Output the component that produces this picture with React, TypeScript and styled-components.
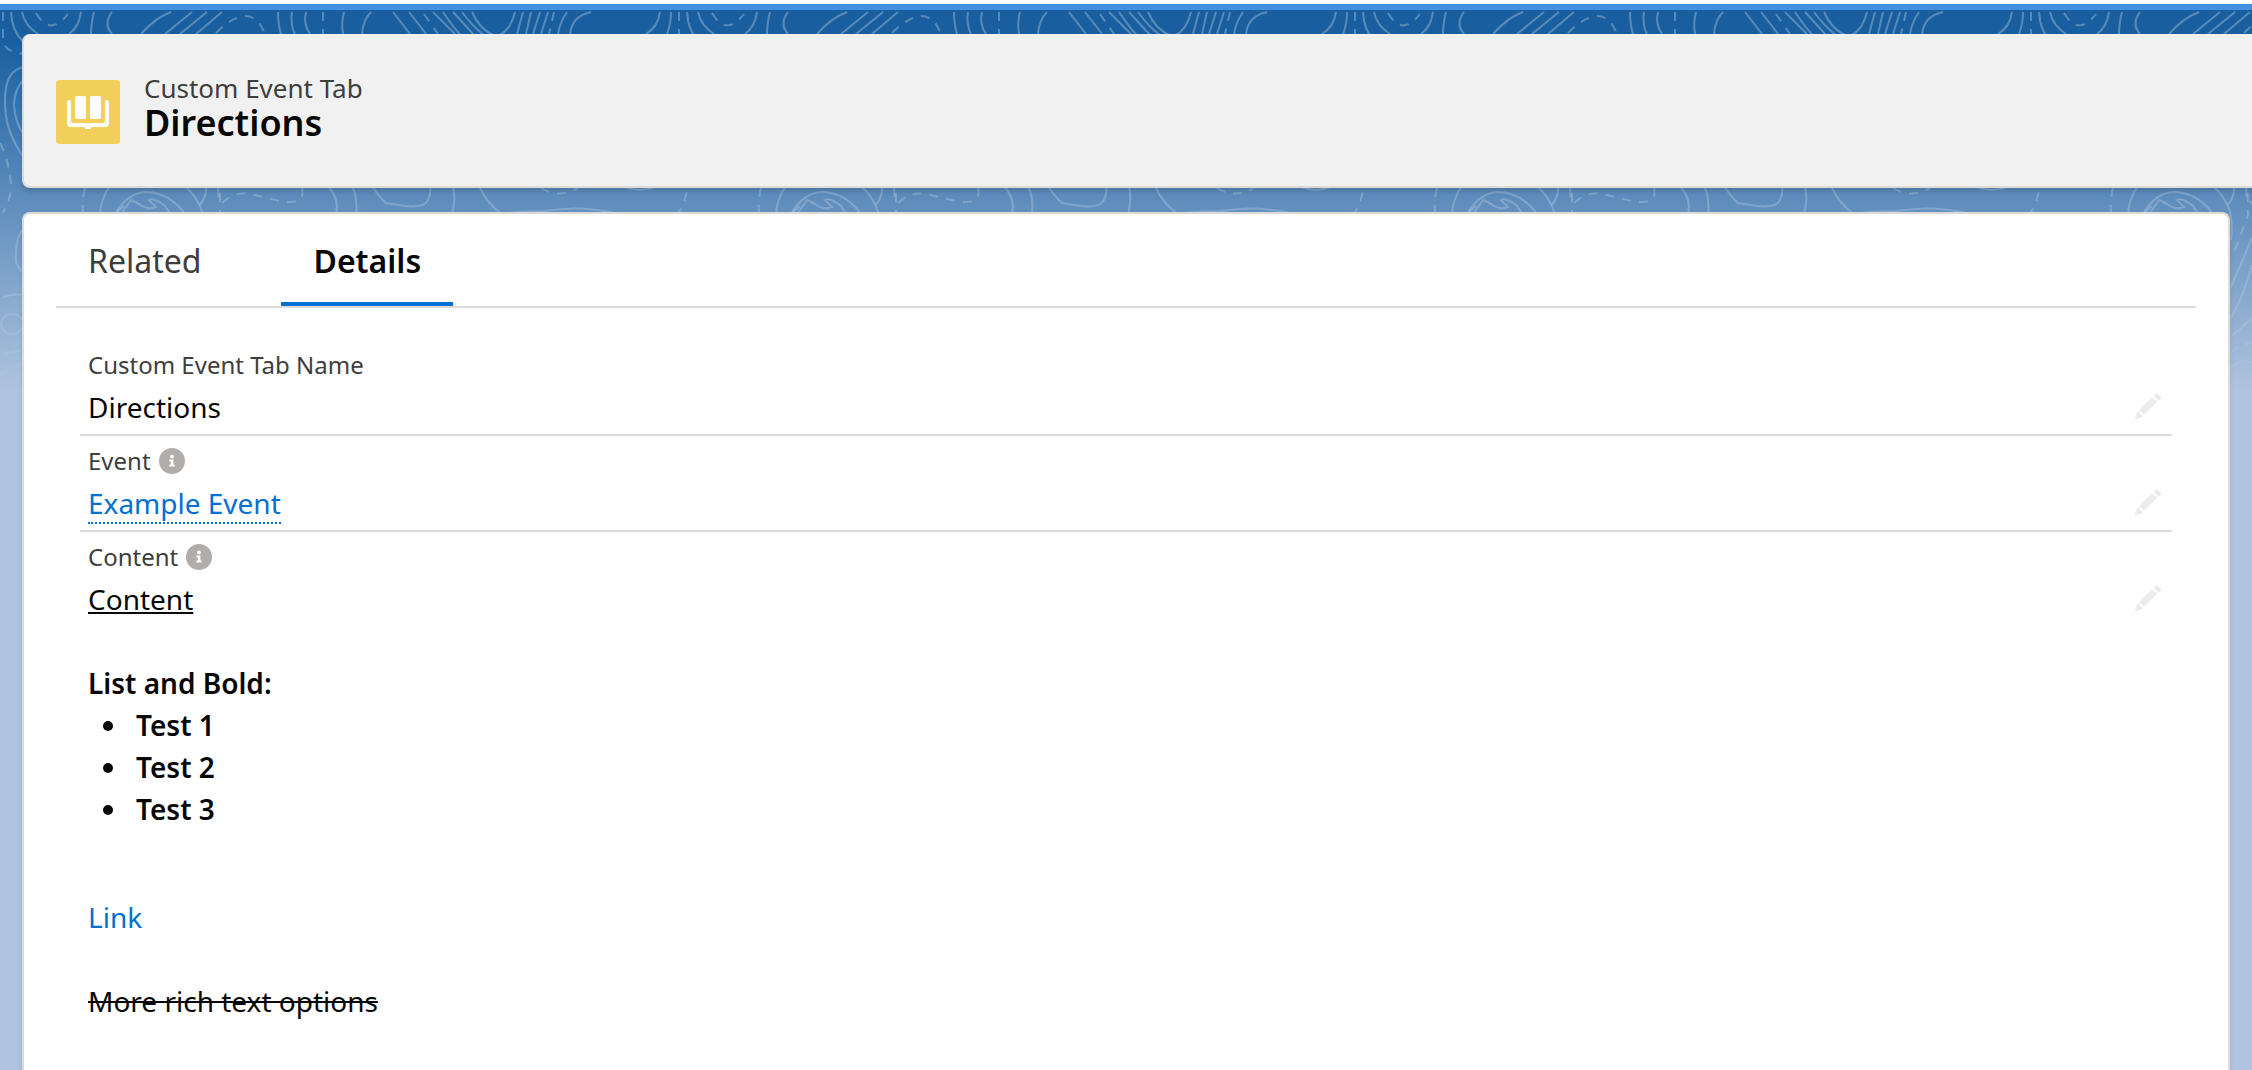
import React, { useState } from "react";
import styled, { createGlobalStyle } from "styled-components";

const GlobalStyle = createGlobalStyle`
  *, *::before, *::after { box-sizing: border-box; }
  body {
    margin: 0;
    background: #b0c4df;
    color: #080707;
    font-family: "Noto Sans", "Open Sans", sans-serif;
    font-size: 28px;
    line-height: 42px;
  }
`;

const Page = styled.div`
  position: relative;
  display: flex;
  flex-direction: column;
  min-height: 100vh;
  overflow: hidden;
`;

const TopBar = styled.div`
  height: 10px;
  border-top: 4px solid #ffffff;
  background: #4190e2;
`;

const Backdrop = styled.svg`
  position: absolute;
  top: 10px;
  left: 0;
  width: 100%;
  height: 400px;
`;

const Content = styled.main`
  position: relative;
  flex: 1;
  display: flex;
  flex-direction: column;
  gap: 24px;
  padding: 24px 22px 0;
`;

const PageHeader = styled.header`
  display: flex;
  align-items: flex-start;
  gap: 24px;
  margin-right: -32px;
  padding: 38px 32px 42px;
  border: solid #dddbda;
  border-width: 0 2px 2px;
  border-radius: 8px;
  background: #f1f1f1;
  box-shadow: 0 4px 4px rgba(0, 0, 0, 0.12);
`;

const EntityIcon = styled.svg`
  width: 64px;
  height: 64px;
  margin-top: 8px;
  border-radius: 4px;
  background: #f2cf5b;
`;

const EntityType = styled.p`
  margin: 0;
  color: #3e3e3c;
  font-size: 26px;
  line-height: 32px;
`;

const RecordName = styled.h1`
  margin: 0;
  font-size: 36px;
  font-weight: 600;
  line-height: 38px;
`;

const Card = styled.section`
  flex: 1;
  padding: 0 32px 24px;
  border: 2px solid #dddbda;
  border-bottom: 0;
  border-radius: 8px 8px 0 0;
  background: #ffffff;
  box-shadow: 0 4px 4px rgba(0, 0, 0, 0.1);
`;

const TabList = styled.div`
  display: flex;
  gap: 48px;
  border-bottom: 2px solid #dddbda;
`;

const Tab = styled.button<{ $active: boolean }>`
  height: 92px;
  padding: 0 32px;
  border: 0;
  background: none;
  box-shadow: ${(p) => (p.$active ? "inset 0 -4px #0070d2" : "none")};
  color: ${(p) => (p.$active ? "#080707" : "#3e3e3c")};
  font-family: inherit;
  font-size: 32px;
  font-weight: ${(p) => (p.$active ? 600 : 400)};
  cursor: pointer;
`;

const Form = styled.div`
  margin: 32px 24px 0;
`;

const Field = styled.div`
  display: flex;
  align-items: flex-start;
  justify-content: space-between;
  padding: 8px 10px 6px 8px;
  border-bottom: 2px solid #dddbda;

  &:last-child {
    border-bottom: 0;
  }
`;

const FieldLabel = styled.div`
  display: flex;
  align-items: center;
  gap: 8px;
  height: 34px;
  margin-bottom: 4px;
  color: #3e3e3c;
  font-size: 24px;
  line-height: 34px;
`;

const IconButton = styled.button`
  display: flex;
  padding: 0;
  border: 0;
  background: none;
  cursor: pointer;
`;

const EditButton = styled(IconButton)`
  margin-top: 44px;
`;

const Icon = styled.svg`
  width: 28px;
  height: 28px;
`;

const InfoGlyph = styled.svg`
  width: 26px;
  height: 26px;
`;

const Link = styled.a`
  color: #0070d2;
  text-decoration: none;
`;

const LookupLink = styled(Link)`
  border-bottom: 2px dotted #0070d2;
`;

const RichText = styled.div`
  p {
    min-height: 42px;
    margin: 0;
  }

  u {
    text-decoration-thickness: 2px;
    text-underline-offset: 2px;
    text-decoration-skip-ink: none;
  }

  s {
    text-decoration-thickness: 2px;
  }

  strong,
  ul {
    font-weight: 600;
  }

  ul {
    margin: 0 0 24px;
    padding-left: 42px;
  }

  li {
    padding-left: 6px;
  }
`;

const LINES = [
  "M11 12Q12 32 24 42", "M22 12Q25 26 38 34", "M81 12Q79 27 69 34", "M94 12Q91 24 91 34",
  "M112 12Q103 24 112 34", "M171 12Q155 18 141 34", "M192 12L165 34", "M207 12L180 34",
  "M222 12L196 34", "M278 12Q278 24 281 34", "M292 12Q290 24 295 34", "M306 12Q303 24 310 34",
  "M344 12Q341 24 343 34", "M371 12Q363 20 362 34", "M393 12L410 34", "M409 12Q420 26 426 34",
  "M433 12L455 34", "M443 12Q455 30 467 42", "M453 12L475 36", "M462 12Q472 26 485 36",
  "M472 12Q479 29 495 36", "M515 12Q511 29 500 35", "M523 12L517 34", "M531 12L526 34",
  "M540 12L533 34", "M548 12L541 34", "M567 12Q560 22 558 34", "M591 12Q572 16 570 34",
  "M660 12Q658 27 646 34", "M671 12Q671 24 667 34",
  "M110 186Q101 198 100 214", "M185 186Q198 198 202 212Q205 225 203 240",
  "M115 214Q128 192 147 192Q170 193 185 214",
  "M117 212L124 206M121 214L131 200Q136 202 142 206T156 207L149 200Q154 197 165 206L169 212",
  "M206 186Q207 196 200 205", "M328 186Q340 200 336 214", "M352 186Q358 198 356 214",
  "M372 186Q380 198 386 203L405 206Q425 208 428 200Q431 194 430 186", "M453 186Q456 200 452 214",
  "M479 186Q487 204 502 214", "M625 187Q640 193 654 187", "M508 213Q525 211 545 211Q580 205 614 213",
  "M24 67Q5 70 5 100Q4 130 24 158", "M24 79Q14 90 14 105Q15 122 24 135",
  "M24 229Q15 235 16 262Q18 268 24 273", "M2 298Q12 293 24 295", "M2 354L24 350",
  "M0 397Q10 382 24 374", "M0 413Q12 404 24 392",
  "M224 238L203 287", "M224 265Q216 295 203 318", "M226 316L202 338", "M202 369Q214 357 226 363",
];

const DASHES = [
  "M3 12V40Q4 52 24 54", "M36 13Q50 37 68 14", "M216 33Q232 17 245 16Q258 16 264 32",
  "M323 12V34", "M424 14L438 34", "M554 12L549 34", "M679 12V40", "M85 188Q82 200 83 212",
  "M218 188L219 204", "M222 203Q235 191 250 194L280 201Q306 206 302 188", "M541 188Q558 199 578 188",
  "M0 143Q11 165 11 190Q9 203 3 212", "M0 375L24 361", "M220 193V215L204 258", "M226 343Q212 343 202 354",
];

function TopographicBackdrop() {
  return (
    <Backdrop aria-hidden="true">
      <defs>
        <pattern id="contours" width="676" height="420" y="-10" patternUnits="userSpaceOnUse">
          <g fill="none" stroke="#ffffff" strokeOpacity="0.27" strokeWidth="2">
            {LINES.map((d) => (
              <path key={d} d={d} />
            ))}
            <ellipse cx="12" cy="324" rx="11" ry="10" />
            <g strokeDasharray="9 8">
              {DASHES.map((d) => (
                <path key={d} d={d} />
              ))}
            </g>
          </g>
        </pattern>
        <linearGradient id="haze" gradientUnits="userSpaceOnUse" x1="0" y1="30" x2="0" y2="380">
          <stop offset="0" stopColor="#b0c4df" stopOpacity="0" />
          <stop offset="1" stopColor="#b0c4df" />
        </linearGradient>
      </defs>
      <rect width="100%" height="100%" fill="#195f9f" />
      <rect width="100%" height="100%" fill="url(#contours)" />
      <rect width="100%" height="100%" fill="url(#haze)" />
    </Backdrop>
  );
}

function BookIcon() {
  return (
    <EntityIcon viewBox="0 0 64 64" aria-hidden="true">
      <g fill="#ffffff">
        <rect x="19" y="16" width="11" height="23" rx="2" />
        <rect x="34" y="16" width="11" height="23" rx="2" />
        <path d="M13 20q2 0 2 2v19q0 2 2 2h30q2 0 2-2V22q0-2 2-2 2 0 2 2v21q0 4-4 4H36q-1 0-1 1 0 1-1 1h-4q-1 0-1-1 0-1-1-1H15q-4 0-4-4V22q0-2 2-2z" />
      </g>
    </EntityIcon>
  );
}

function InfoIcon() {
  return (
    <InfoGlyph viewBox="0 0 26 26" aria-hidden="true">
      <circle cx="13" cy="13" r="13" fill="#b0adab" />
      <g fill="#ffffff">
        <circle cx="13" cy="8.5" r="1.9" />
        <path d="M10.4 11.6h4v5h1.3v1.9h-5.4v-1.9h1.5v-3.1h-1.4z" />
      </g>
    </InfoGlyph>
  );
}

function PencilIcon() {
  return (
    <Icon viewBox="0 0 28 28" aria-hidden="true">
      <g fill="#ecebea">
        <path d="M18.300 5.300 23 10 10 22.700 5 18z" />
        <path d="M19.700 3.700 21.500 1.900Q22.700 .8 24 1.900L26.500 4.400Q27.600 5.700 26.500 7L24.500 9.100z" />
        <path d="M4 19.200 8.800 24.200Q8.900 25 8.100 25.200L2 27Q.7 27.200 1 26L3 19.700Q3.300 19 4 19.200z" />
      </g>
    </Icon>
  );
}

interface DetailFieldProps {
  label: string;
  help?: boolean;
  children: React.ReactNode;
}

function DetailField({ label, help, children }: DetailFieldProps) {
  return (
    <Field>
      <div>
        <FieldLabel>
          <span>{label}</span>
          {help && (
            <IconButton type="button" aria-label={`Help ${label}`}>
              <InfoIcon />
            </IconButton>
          )}
        </FieldLabel>
        {children}
      </div>
      <EditButton type="button" aria-label={`Edit ${label}`}>
        <PencilIcon />
      </EditButton>
    </Field>
  );
}

const TABS = ["Related", "Details"];

export default function App() {
  const [active, setActive] = useState("Details");

  return (
    <Page>
      <GlobalStyle />
      <TopographicBackdrop />
      <TopBar />
      <Content>
        <PageHeader>
          <BookIcon />
          <div>
            <EntityType>Custom Event Tab</EntityType>
            <RecordName>Directions</RecordName>
          </div>
        </PageHeader>
        <Card>
          <TabList role="tablist">
            {TABS.map((tab) => (
              <Tab
                key={tab}
                type="button"
                role="tab"
                aria-selected={tab === active}
                $active={tab === active}
                onClick={() => setActive(tab)}
              >
                {tab}
              </Tab>
            ))}
          </TabList>
          <Form role="tabpanel">
            <DetailField label="Custom Event Tab Name">
              <div>Directions</div>
            </DetailField>
            <DetailField label="Event" help>
              <LookupLink href="#event">Example Event</LookupLink>
            </DetailField>
            <DetailField label="Content" help>
              <RichText>
                <p><u>Content</u></p>
                <p />
                <p><strong>List and Bold:</strong></p>
                <ul>
                  <li>Test 1</li>
                  <li>Test 2</li>
                  <li>Test 3</li>
                </ul>
                <p />
                <p><Link href="#link">Link</Link></p>
                <p />
                <p><s>More rich text options</s></p>
              </RichText>
            </DetailField>
          </Form>
        </Card>
      </Content>
    </Page>
  );
}
